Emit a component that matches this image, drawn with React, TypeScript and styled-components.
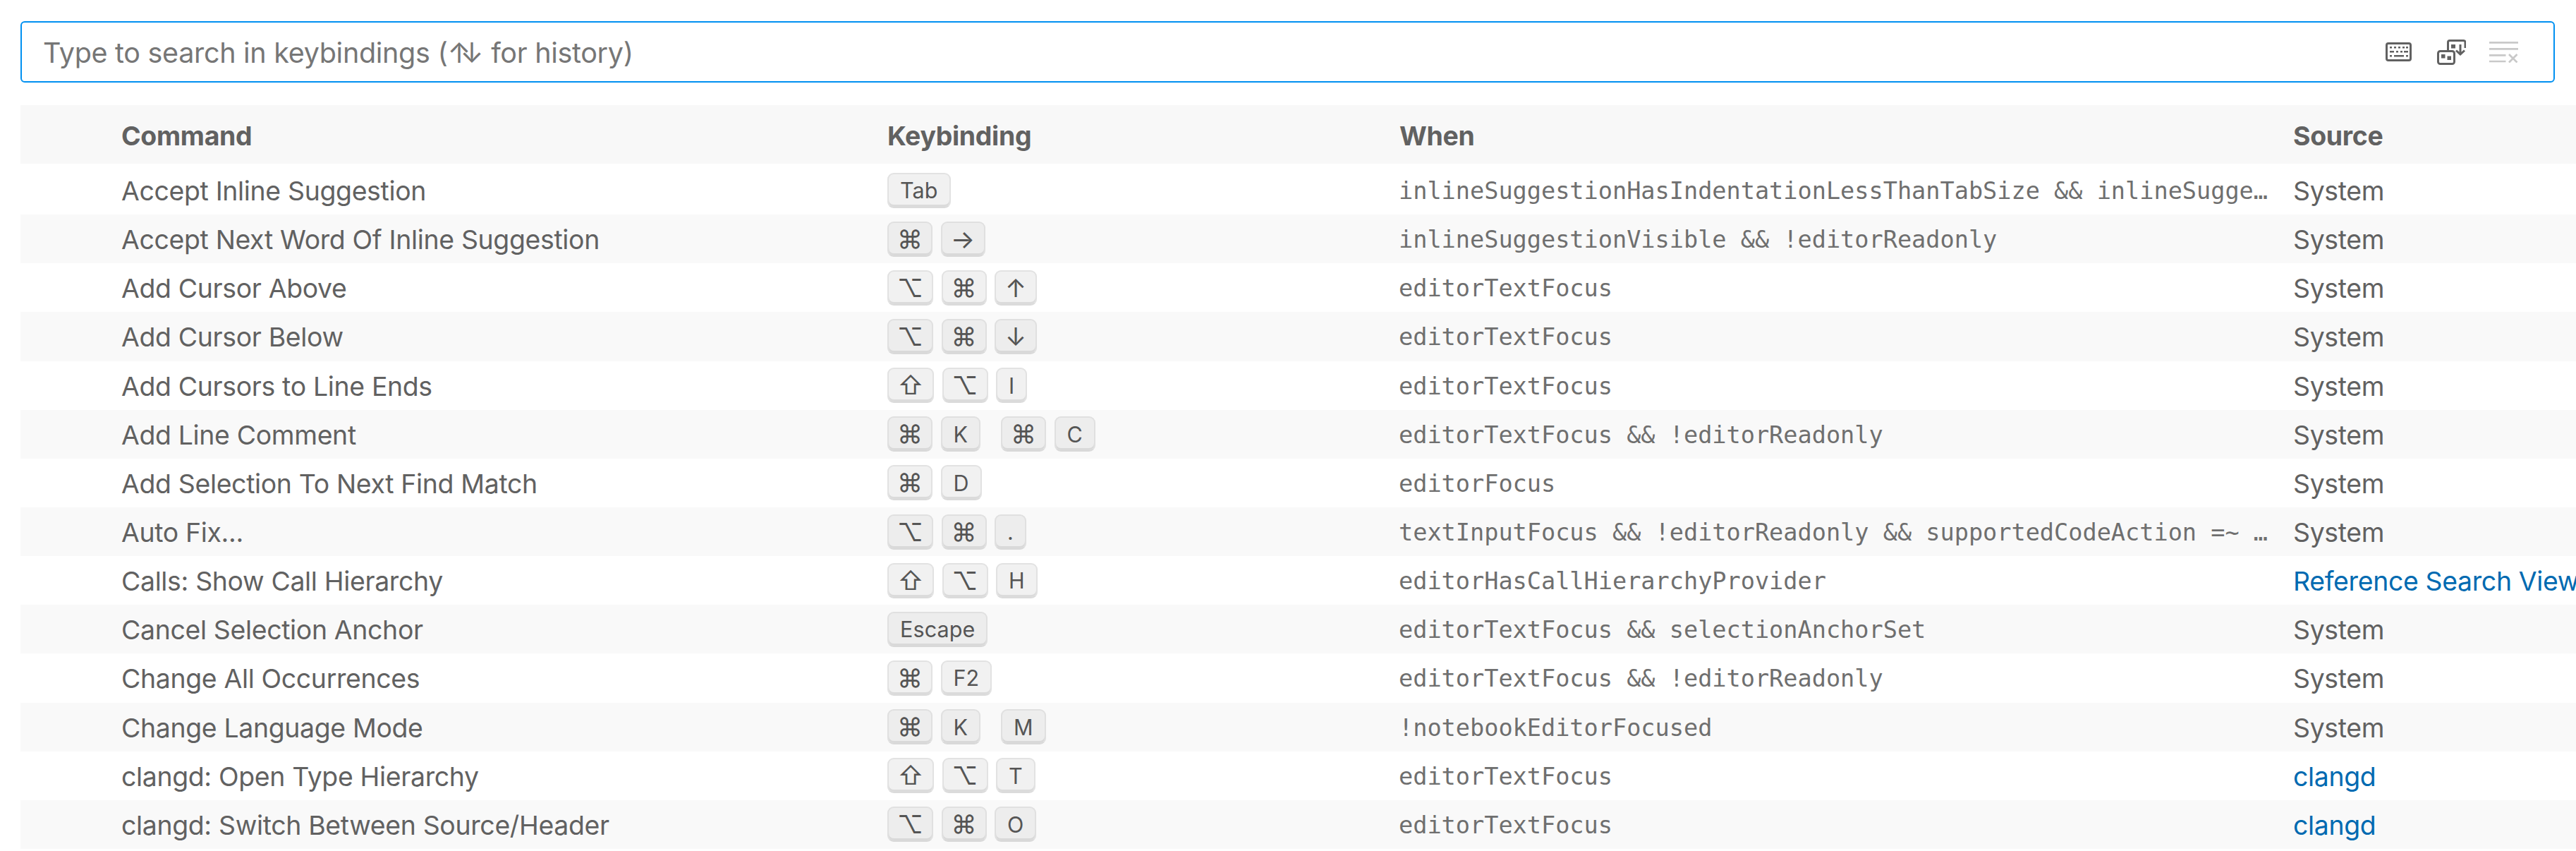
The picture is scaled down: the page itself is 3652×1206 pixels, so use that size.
import styled, { createGlobalStyle } from 'styled-components';

const GlobalStyle = createGlobalStyle`
  html, body { margin: 0; padding: 0; background: #fff; overflow: hidden; }
  body { font-family: Inter, "Liberation Sans", sans-serif; color: #616161; }
`;

const Page = styled.div`
  width: 3652px;
  height: 1206px;
  overflow: hidden;
  padding-top: 30px;
  box-sizing: border-box;
`;

const SearchBar = styled.div`
  display: flex;
  align-items: center;
  justify-content: space-between;
  box-sizing: border-box;
  width: 3593px;
  height: 87px;
  margin-left: 29px;
  padding: 0 50px 0 30px;
  border: 2px solid #0090f1;
  border-radius: 6px;
`;

const Placeholder = styled.span`
  padding-top: 2px;
  font-size: 39.5px;
  letter-spacing: -0.3px;
  color: #767676;
`;

const HistoryArrows = styled.span`
  letter-spacing: -15px;
  margin-right: 15px;
`;

const SearchActions = styled.div`
  display: flex;
  align-items: center;
  gap: 33px;
`;

const KeyboardSvg = styled.svg`
  margin-right: 3px;
`;

const Table = styled.div`
  margin: 32px 0 0 29px;
`;

const HeaderRow = styled.div`
  display: grid;
  grid-template-columns: 1086px 726px 1267px 1fr;
  align-items: center;
  height: 83px;
  margin-bottom: 3px;
  padding: 3px 0 0 143px;
  box-sizing: border-box;
  background: #f8f8f8;
  font-size: 37.4px;
  font-weight: 700;
  letter-spacing: -0.3px;
`;

const Row = styled.div<{ $alt: boolean }>`
  display: grid;
  grid-template-columns: 1086px 725px 1268px 1fr;
  align-items: center;
  height: 69.15px;
  padding-left: 143px;
  background: ${(p) => (p.$alt ? '#f9f9f9' : '#fff')};
  font-size: 37.4px;
  letter-spacing: -0.33px;
  white-space: nowrap;
`;

const Command = styled.div`
  padding-top: 2px;
`;

const Keys = styled.div`
  display: flex;
  align-items: center;
  gap: 29px;
`;

const Chord = styled.div`
  display: flex;
  align-items: center;
  gap: 11.5px;
`;

const Key = styled.span<{ $width?: number }>`
  box-sizing: border-box;
  display: inline-flex;
  align-items: center;
  justify-content: center;
  height: 50px;
  width: ${(p) => (p.$width ? `${p.$width}px` : 'auto')};
  padding: 0 ${(p) => (p.$width ? 0 : 16)}px;
  background: rgba(221, 221, 221, 0.4);
  border: 2px solid rgba(204, 204, 204, 0.4);
  border-bottom-color: rgba(187, 187, 187, 0.4);
  box-shadow: inset 0 -3px 0 rgba(187, 187, 187, 0.4);
  border-radius: 9px;
  font-size: ${(p) => (p.$width ? 36 : 30.5)}px;
  letter-spacing: 0.1px;
  color: #555;
`;

const When = styled.div`
  padding-top: 2px;
  font-family: "DejaVu Sans Mono", monospace;
  font-size: 33.55px;
  letter-spacing: 0;
  color: #6f6f6f;
  width: 1240px;
  overflow: hidden;
  text-overflow: ellipsis;
`;

const Source = styled.div<{ $link?: boolean }>`
  padding-top: 2px;
  color: ${(p) => (p.$link ? '#006ab1' : '#616161')};
`;

const KeyboardIcon = () => (
  <KeyboardSvg width="37" height="27" viewBox="0 0 37 27" fill="none">
    <rect x="1.5" y="1.5" width="34" height="24" rx="2.5" stroke="#616161" strokeWidth="3" />
    <g fill="#616161">
      <rect x="6" y="6" width="3" height="2.5" /><rect x="12" y="6" width="3" height="2.5" /><rect x="18" y="6" width="3" height="2.5" /><rect x="24" y="6" width="3" height="2.5" /><rect x="29" y="6" width="3" height="2.5" />
      <rect x="6" y="12" width="6" height="2.5" /><rect x="15" y="12" width="3" height="2.5" /><rect x="21" y="12" width="3" height="2.5" /><rect x="26" y="12" width="6" height="2.5" />
      <rect x="6" y="18" width="3" height="2.5" /><rect x="12" y="18" width="14" height="2.5" /><rect x="29" y="18" width="3" height="2.5" />
    </g>
  </KeyboardSvg>
);

const SortIcon = () => (
  <svg width="41" height="36" viewBox="0 0 41 36" fill="none">
    <path d="M15.5 15V4a2.5 2.5 0 0 1 2.5-2.5h19.5A2.5 2.5 0 0 1 40 4v8" stroke="#616161" strokeWidth="3" />
    <rect x="1.5" y="16.5" width="23" height="18" rx="3" stroke="#616161" strokeWidth="3" />
    <g fill="#616161">
      <rect x="6" y="21" width="5.5" height="5.5" /><rect x="14.5" y="23.5" width="5.5" height="5.5" /><rect x="20" y="7" width="6" height="5.5" />
    </g>
    <path d="M33 7v14M27 15.5 33 21l6-5.5" stroke="#616161" strokeWidth="3" />
  </svg>
);

const ClearIcon = () => (
  <svg width="41" height="30" viewBox="0 0 41 30" fill="none" stroke="#c9c9c9" strokeWidth="2.7">
    <path d="M0 1.3h41M0 10.3h41M0 19.3h23.5M0 28h23.5M28 18l11.5 11.5M39.5 18 28 29.5" />
  </svg>
);

const glyphWidths: Record<string, number> = {
  '⌘': 64,
  '⌥': 65,
  '⇧': 66,
  '→': 63,
  '↑': 60,
  '↓': 60,
};

type Binding = {
  command: string;
  keys: string[][];
  when: string;
  source: string;
  link?: boolean;
};

const bindings: Binding[] = [
  { command: 'Accept Inline Suggestion', keys: [['Tab']], when: 'inlineSuggestionHasIndentationLessThanTabSize && inlineSuggestionVisible', source: 'System' },
  { command: 'Accept Next Word Of Inline Suggestion', keys: [['⌘', '→']], when: 'inlineSuggestionVisible && !editorReadonly', source: 'System' },
  { command: 'Add Cursor Above', keys: [['⌥', '⌘', '↑']], when: 'editorTextFocus', source: 'System' },
  { command: 'Add Cursor Below', keys: [['⌥', '⌘', '↓']], when: 'editorTextFocus', source: 'System' },
  { command: 'Add Cursors to Line Ends', keys: [['⇧', '⌥', 'I']], when: 'editorTextFocus', source: 'System' },
  { command: 'Add Line Comment', keys: [['⌘', 'K'], ['⌘', 'C']], when: 'editorTextFocus && !editorReadonly', source: 'System' },
  { command: 'Add Selection To Next Find Match', keys: [['⌘', 'D']], when: 'editorFocus', source: 'System' },
  { command: 'Auto Fix...', keys: [['⌥', '⌘', '.']], when: 'textInputFocus && !editorReadonly && supportedCodeAction =~ /(\\s|^)quickfix\\b/', source: 'System' },
  { command: 'Calls: Show Call Hierarchy', keys: [['⇧', '⌥', 'H']], when: 'editorHasCallHierarchyProvider', source: 'Reference Search View', link: true },
  { command: 'Cancel Selection Anchor', keys: [['Escape']], when: 'editorTextFocus && selectionAnchorSet', source: 'System' },
  { command: 'Change All Occurrences', keys: [['⌘', 'F2']], when: 'editorTextFocus && !editorReadonly', source: 'System' },
  { command: 'Change Language Mode', keys: [['⌘', 'K'], ['M']], when: '!notebookEditorFocused', source: 'System' },
  { command: 'clangd: Open Type Hierarchy', keys: [['⇧', '⌥', 'T']], when: 'editorTextFocus', source: 'clangd', link: true },
  { command: 'clangd: Switch Between Source/Header', keys: [['⌥', '⌘', 'O']], when: 'editorTextFocus', source: 'clangd', link: true },
];

export default function App() {
  return (
    <Page>
      <GlobalStyle />
      <SearchBar>
        <Placeholder>
          Type to search in keybindings (<HistoryArrows>↑↓</HistoryArrows> for history)
        </Placeholder>
        <SearchActions>
          <KeyboardIcon />
          <SortIcon />
          <ClearIcon />
        </SearchActions>
      </SearchBar>
      <Table>
        <HeaderRow>
          <span>Command</span>
          <span>Keybinding</span>
          <span>When</span>
          <span>Source</span>
        </HeaderRow>
        {bindings.map((b, i) => (
          <Row key={b.command} $alt={i % 2 === 1}>
            <Command>{b.command}</Command>
            <Keys>
              {b.keys.map((chord, c) => (
                <Chord key={c}>
                  {chord.map((k) => (
                    <Key key={k} $width={glyphWidths[k]}>{k}</Key>
                  ))}
                </Chord>
              ))}
            </Keys>
            <When>{b.when}</When>
            <Source $link={b.link}>{b.source}</Source>
          </Row>
        ))}
      </Table>
    </Page>
  );
}
